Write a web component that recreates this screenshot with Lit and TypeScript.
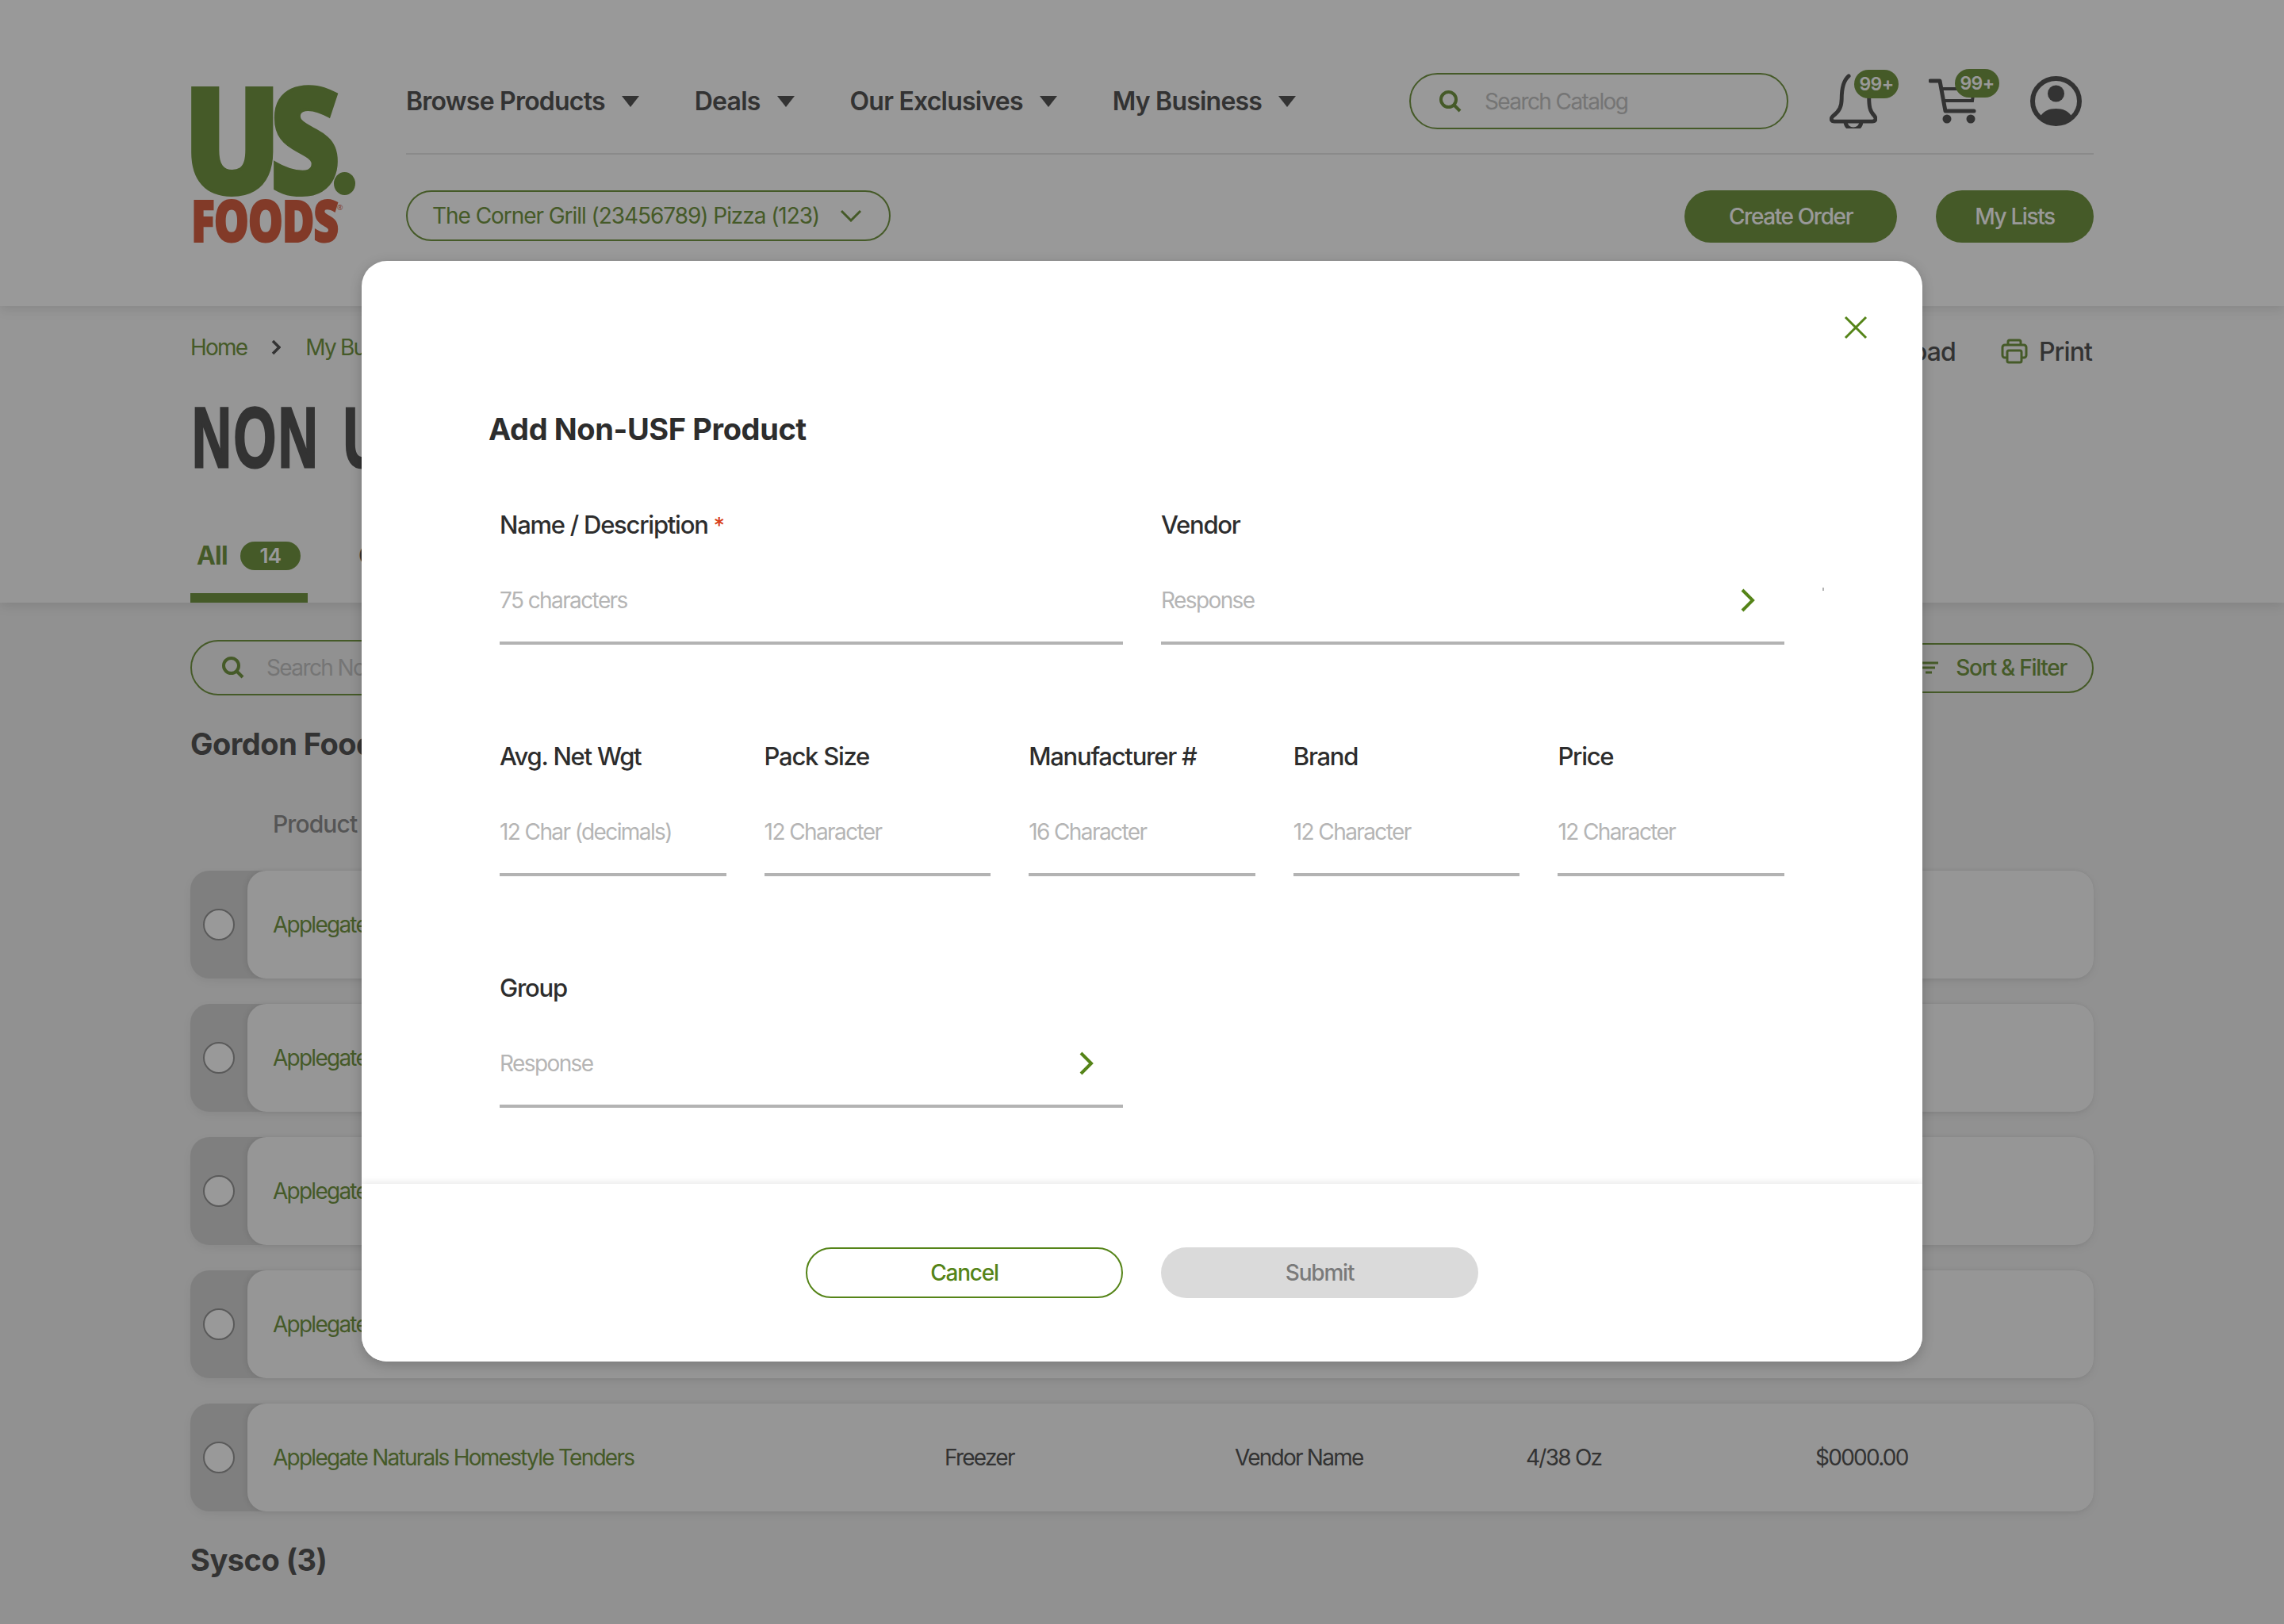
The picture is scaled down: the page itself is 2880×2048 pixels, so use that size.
import { LitElement, html, css, svg } from "lit";
import { customElement } from "lit/decorators.js";

const searchIcon = svg`<circle cx="11.5" cy="11.5" r="9.5" fill="none" stroke="#749643" stroke-width="4"/><path d="M18 18l8 8" stroke="#749643" stroke-width="4" fill="none"/>`;

const rows = [
  "Applegate Naturals Homestyle Tenders",
  "Applegate Naturals Homestyle Tenders",
  "Applegate Naturals Homestyle Tenders",
  "Applegate Naturals Homestyle Tenders",
  "Applegate Naturals Homestyle Tenders",
];

@customElement("app-root")
export class AppRoot extends LitElement {
  static styles = css`
    :host {
      display: block;
      position: relative;
      width: 2880px;
      height: 2048px;
      overflow: hidden;
      font-family: "Inter", "Liberation Sans", sans-serif;
      font-size: 28px;
      letter-spacing: -1.6px;
      color: #555;
      background: #f2f2f2;
    }
    button, input { font: inherit; letter-spacing: inherit; }

    /* header */
    .header {
      position: relative;
      z-index: 2;
      display: flex;
      height: 386px;
      box-sizing: border-box;
      padding: 0 240px;
      background: #fff;
      box-shadow: 0 4px 14px rgba(0, 0, 0, 0.1);
    }
    .logo { width: 272px; flex: none; }
    .logo svg { display: block; margin: 100px 0 0 -12px; }
    .header-main { flex: 1; min-width: 0; }
    .top {
      display: flex;
      align-items: center;
      height: 71px;
      padding: 92px 0 30px;
      border-bottom: 2px solid #e6e6e6;
    }
    .nav { display: flex; gap: 70px; }
    .nav-item {
      display: flex;
      align-items: center;
      gap: 21px;
      font-size: 32px;
      font-weight: 600;
      letter-spacing: -0.78px;
    }
    .caret {
      width: 0;
      height: 0;
      border-left: 11px solid transparent;
      border-right: 11px solid transparent;
      border-top: 14px solid #555;
    }
    .search {
      display: flex;
      align-items: center;
      box-sizing: border-box;
      border: 2px solid #749643;
      border-radius: 36px;
      color: #c4c4c4;
    }
    .search svg { flex: none; }
    .catalog {
      margin-left: auto;
      width: 478px;
      height: 71px;
      padding-left: 36px;
      gap: 29px;
    }
    .icon-box { position: relative; flex: none; display: block; }
    .icon-box svg { display: block; }
    .bell { margin-left: 52px; width: 60px; height: 69px; }
    .cart { margin-left: 65px; width: 60px; height: 57px; }
    .profile { margin-left: 68px; margin-right: 15px; width: 65px; height: 63px; }
    .badge {
      position: absolute;
      display: flex;
      align-items: center;
      justify-content: center;
      width: 56px;
      height: 36px;
      border-radius: 18px;
      background: #749643;
      color: #fff;
      font-size: 23px;
      font-weight: 600;
      letter-spacing: -0.6px;
    }
    .bell .badge { left: 31px; top: -5px; }
    .cart .badge { left: 33px; top: -12px; }
    .sub {
      display: flex;
      align-items: flex-start;
      margin-top: 45px;
    }
    .store {
      display: flex;
      align-items: center;
      gap: 26px;
      box-sizing: border-box;
      width: 611px;
      height: 64px;
      padding-left: 31px;
      border: 2px solid #749643;
      border-radius: 32px;
      color: #749643;
      font-weight: 400;
      letter-spacing: -1.05px;
    }
    .btn-fill {
      display: flex;
      align-items: center;
      justify-content: center;
      height: 66px;
      border: 0;
      border-radius: 33px;
      background: #749643;
      color: #fff;
      font-weight: 500;
      letter-spacing: -1.4px;
    }
    .create { margin-left: auto; width: 268px; }
    .lists { margin-left: 49px; width: 199px; }

    /* title band */
    .band {
      position: relative;
      z-index: 1;
      height: 374px;
      box-sizing: border-box;
      padding: 0 240px;
      background: #fafafa;
      box-shadow: 0 4px 14px rgba(0, 0, 0, 0.1);
    }
    .crumbs {
      display: flex;
      align-items: center;
      height: 104px;
      color: #749643;
      letter-spacing: -1.8px;
    }
    .crumbs .sep { margin: 0 31px; }
    .crumbs .sep svg { display: block; }
    .actions {
      margin-left: auto;
      display: flex;
      align-items: center;
      gap: 57px;
      padding: 10px 2px 0 0;
      color: #555;
      font-size: 32px;
      font-weight: 500;
      letter-spacing: -0.9px;
    }
    .action { display: flex; align-items: center; gap: 14px; }
    .action svg { display: block; }
    .title {
      margin: 3px 0 0 2px;
      height: 118px;
      font-family: "Liberation Sans", sans-serif;
      font-size: 108px;
      line-height: 118px;
      font-weight: 700;
      letter-spacing: 4px;
      word-spacing: 12px;
      white-space: nowrap;
      transform: scaleX(0.64);
      transform-origin: left;
      -webkit-text-stroke: 3px #555;
    }
    .tabs { display: flex; gap: 64px; margin-top: 72px; height: 77px; }
    .tab {
      display: flex;
      align-items: flex-start;
      gap: 16px;
      box-sizing: border-box;
      width: 148px;
      height: 77px;
      padding-left: 8px;
      border-bottom: 12px solid #749643;
      color: #749643;
      font-size: 32px;
      font-weight: 700;
      line-height: 36px;
      letter-spacing: -0.8px;
    }
    .tab-count {
      display: flex;
      align-items: center;
      justify-content: center;
      width: 76px;
      height: 36px;
      border-radius: 18px;
      background: #749643;
      color: #fff;
      font-size: 26px;
      font-weight: 600;
    }
    .tab-plain { color: #555; font-size: 32px; font-weight: 600; line-height: 36px; }

    /* list */
    .main { padding: 47px 240px 0; }
    .tools { display: flex; align-items: center; justify-content: space-between; }
    .notes {
      width: 700px;
      height: 70px;
      padding-left: 38px;
      gap: 28px;
    }
    .sort {
      display: flex;
      align-items: center;
      gap: 22px;
      box-sizing: border-box;
      height: 63px;
      padding: 0 32px;
      border: 2px solid #749643;
      border-radius: 32px;
      color: #749643;
      font-weight: 500;
      letter-spacing: -1.3px;
    }
    .sort svg { display: block; }
    .vendor {
      margin: 0;
      height: 48px;
      font-size: 38px;
      font-weight: 700;
      line-height: 48px;
      letter-spacing: -0.5px;
    }
    .gordon { margin-top: 37px; }
    .sysco { margin-top: 37px; }
    .cols {
      display: grid;
      grid-template-columns: 847px 366px 367px 365px 1fr;
      align-items: center;
    }
    .list-head {
      margin-top: 59px;
      height: 36px;
      padding-left: 104px;
      color: #8e8e8e;
      font-size: 30px;
      font-weight: 500;
      letter-spacing: -0.9px;
    }
    .rows { display: flex; flex-direction: column; gap: 32px; margin-top: 41px; }
    .row {
      display: flex;
      height: 136px;
      border-radius: 24px;
      background: #d4d4d4;
      box-shadow: 0 4px 12px rgba(0, 0, 0, 0.06);
    }
    .tick { display: flex; align-items: center; justify-content: center; width: 72px; flex: none; }
    .radio {
      box-sizing: border-box;
      width: 40px;
      height: 40px;
      border: 2px solid #969696;
      border-radius: 50%;
      background: #fff;
    }
    .card {
      flex: 1;
      padding-left: 32px;
      border-radius: 24px;
      background: #fafafa;
      box-shadow: -2px 0 6px rgba(0, 0, 0, 0.08);
      letter-spacing: -1.75px;
    }
    .card-name { color: #749643; }

    /* modal */
    .overlay {
      position: absolute;
      inset: 0;
      z-index: 5;
      display: flex;
      align-items: center;
      justify-content: center;
      background: rgba(0, 0, 0, 0.4);
    }
    .modal {
      position: relative;
      display: flex;
      flex-direction: column;
      width: 1968px;
      height: 1388px;
      margin-bottom: 2px;
      border-radius: 32px;
      background: #fff;
      color: #2d2d2d;
      box-shadow: 0 4px 16px rgba(0, 0, 0, 0.2);
      overflow: hidden;
    }
    .close { position: absolute; top: 69px; right: 69px; display: block; }
    .speck { position: absolute; left: 1842px; top: 412px; width: 2px; height: 4px; background: #b3b3b3; }
    .modal-body { flex: 1; padding: 188px 174px 0; }
    .modal-title {
      margin: 0 0 77px -14px;
      font-size: 38px;
      font-weight: 650;
      line-height: 48px;
      letter-spacing: -0.4px;
    }
    .form { display: flex; flex-direction: column; gap: 121px; }
    .form-row { display: grid; gap: 48px; }
    .two { grid-template-columns: repeat(2, minmax(0, 1fr)); }
    .five { grid-template-columns: repeat(5, minmax(0, 1fr)); }
    .field label {
      display: block;
      height: 40px;
      font-size: 31px;
      font-weight: 500;
      line-height: 40px;
      letter-spacing: -1.25px;
    }
    .req { color: #d8401a; font-size: 28px; }
    .control {
      display: flex;
      align-items: center;
      box-sizing: border-box;
      height: 131px;
      padding-top: 23px;
      padding-right: 36px;
      border-bottom: 4px solid #b3b3b3;
    }
    .control input {
      flex: 1;
      min-width: 0;
      padding: 0;
      border: 0;
      outline: 0;
      background: none;
      color: #2d2d2d;
    }
    .control input::placeholder { color: #b5b5b5; opacity: 1; }
    .control svg { flex: none; display: block; }
    .modal-foot {
      position: relative;
      display: flex;
      justify-content: center;
      gap: 48px;
      height: 224px;
      box-sizing: border-box;
      padding-top: 80px;
      background: #fff;
      box-shadow: 0 -3px 8px rgba(0, 0, 0, 0.08);
    }
    .pill {
      width: 400px;
      height: 64px;
      border-radius: 32px;
      font-weight: 500;
      letter-spacing: -1.2px;
    }
    .cancel { border: 2px solid #558418; background: #fff; color: #558418; }
    .submit { border: 0; background: #dadada; color: #7a7a7a; }
  `;

  renderField(label: string, placeholder: string, opts: { required?: boolean; chevron?: boolean } = {}) {
    return html`
      <div class="field">
        <label>${label}${opts.required ? html` <span class="req">*</span>` : ""}</label>
        <div class="control">
          <input placeholder=${placeholder} />
          ${opts.chevron
            ? html`<svg width="20" height="30" viewBox="0 0 20 30"><path d="M3 2l13 13L3 28" fill="none" stroke="#558418" stroke-width="4"/></svg>`
            : ""}
        </div>
      </div>
    `;
  }

  render() {
    return html`
      <header class="header">
        <div class="logo">
          <svg width="232" height="216" viewBox="-12 0 232 216">
            <text x="-9" y="144" font-family="Open Sans" font-size="186" font-weight="800" fill="#749643" stroke="#749643" stroke-width="4" textLength="122" lengthAdjust="spacingAndGlyphs">U</text>
            <text x="100" y="144" font-family="Open Sans" font-size="186" font-weight="800" fill="#749643" stroke="#749643" stroke-width="4" textLength="88" lengthAdjust="spacingAndGlyphs">S</text>
            <ellipse cx="194.500" cy="131.500" rx="13.500" ry="14.500" fill="#749643"/>
            <text x="1" y="205" font-family="Open Sans" font-size="72" font-weight="800" fill="#d96143" stroke="#d96143" stroke-width="2" textLength="185" lengthAdjust="spacingAndGlyphs">FOODS</text>
            <text x="185" y="165" font-family="Open Sans" font-size="9" fill="#d96143">®</text>
          </svg>
        </div>
        <div class="header-main">
          <div class="top">
            <nav class="nav">
              ${["Browse Products", "Deals", "Our Exclusives", "My Business"].map(
                (n) => html`<div class="nav-item">${n}<span class="caret"></span></div>`
              )}
            </nav>
            <div class="search catalog">
              <svg width="28" height="28" viewBox="0 0 28 28">${searchIcon}</svg>
              <span>Search Catalog</span>
            </div>
            <div class="icon-box bell">
              <svg width="60" height="69" viewBox="0 0 60 70">
                <path d="M24 3C17 9 15 20 15 32C15 42 12 48 4 54C0 58 2 61 6 61H54C58 61 60 58 57 54C51 48 50 42 50 30" fill="none" stroke="#555" stroke-width="5" stroke-linecap="round"/>
                <path d="M20 62A10 9 0 0 0 40 62" fill="none" stroke="#555" stroke-width="5"/>
              </svg>
              <span class="badge">99+</span>
            </div>
            <div class="icon-box cart">
              <svg width="60" height="57" viewBox="0 0 60 57">
                <path d="M2 3H14L21 41H57" fill="none" stroke="#555" stroke-width="5" stroke-linecap="round" stroke-linejoin="round"/>
                <path d="M16 13H57L55 28H19" fill="none" stroke="#555" stroke-width="4"/>
                <circle cx="23" cy="51" r="5.500" fill="#555"/>
                <circle cx="53" cy="51" r="5.500" fill="#555"/>
              </svg>
              <span class="badge">99+</span>
            </div>
            <div class="icon-box profile">
              <svg width="65" height="63" viewBox="0 0 65 63">
                <ellipse cx="32.500" cy="31.500" rx="29.500" ry="28.500" fill="none" stroke="#555" stroke-width="6"/>
                <circle cx="32.500" cy="22" r="10.500" fill="#555"/>
                <path d="M12 52C16 44 24 41 32.500 41C41 41 49 44 53 52C47 59 40 62 32.500 62C25 62 18 59 12 52Z" fill="#555"/>
              </svg>
            </div>
          </div>
          <div class="sub">
            <div class="store">
              <span>The Corner Grill (23456789) Pizza (123)</span>
              <svg width="28" height="16" viewBox="0 0 28 16"><path d="M2 2l12 12L26 2" fill="none" stroke="#749643" stroke-width="3"/></svg>
            </div>
            <button class="btn-fill create">Create Order</button>
            <button class="btn-fill lists">My Lists</button>
          </div>
        </div>
      </header>

      <section class="band">
        <div class="crumbs">
          <span>Home</span>
          <span class="sep"><svg width="12" height="20" viewBox="0 0 12 20"><path d="M2 2l8 8-8 8" fill="none" stroke="#555" stroke-width="3.500"/></svg></span>
          <span>My Business</span>
          <div class="actions">
            <div class="action">
              <svg width="30" height="32" viewBox="0 0 30 32"><path d="M15 2v18M7 13l8 8 8-8M3 29h24" fill="none" stroke="#749643" stroke-width="3"/></svg>
              <span>Download</span>
            </div>
            <div class="action">
              <svg width="34" height="32" viewBox="0 0 34 32">
                <path d="M9 8V4a2 2 0 0 1 2-2h12a2 2 0 0 1 2 2v4" fill="none" stroke="#749643" stroke-width="3"/>
                <path d="M8 24H5a3 3 0 0 1-3-3V11a3 3 0 0 1 3-3h24a3 3 0 0 1 3 3v10a3 3 0 0 1-3 3h-3" fill="none" stroke="#749643" stroke-width="3"/>
                <rect x="8" y="15" width="18" height="15" rx="2" fill="none" stroke="#749643" stroke-width="3"/>
              </svg>
              <span>Print</span>
            </div>
          </div>
        </div>
        <h1 class="title">NON USF PRODUCTS</h1>
        <div class="tabs">
          <div class="tab"><span>All</span><span class="tab-count">14</span></div>
          <div class="tab-plain">Groups</div>
        </div>
      </section>

      <section class="main">
        <div class="tools">
          <div class="search notes">
            <svg width="28" height="28" viewBox="0 0 28 28">${searchIcon}</svg>
            <span>Search Non-USF Products</span>
          </div>
          <div class="sort">
            <svg width="24" height="16" viewBox="0 0 24 16"><path d="M0 2h24M4 8h16M8 14h8" stroke="#749643" stroke-width="3" fill="none"/></svg>
            <span>Sort &amp; Filter</span>
          </div>
        </div>
        <h2 class="vendor gordon">Gordon Food Service (11)</h2>
        <div class="cols list-head">
          <span>Product</span><span>Storage</span><span>Vendor</span><span>Pack Size</span><span>Price</span>
        </div>
        <div class="rows">
          ${rows.map(
            (name) => html`
              <div class="row">
                <div class="tick"><span class="radio"></span></div>
                <div class="card cols">
                  <span class="card-name">${name}</span>
                  <span>Freezer</span>
                  <span>Vendor Name</span>
                  <span>4/38 Oz</span>
                  <span>$0000.00</span>
                </div>
              </div>
            `
          )}
        </div>
        <h2 class="vendor sysco">Sysco (3)</h2>
      </section>

      <div class="overlay">
        <div class="modal">
          <svg class="close" width="30" height="30" viewBox="0 0 30 30"><path d="M2 2l26 26M28 2L2 28" fill="none" stroke="#558418" stroke-width="3"/></svg>
          <span class="speck"></span>
          <div class="modal-body">
            <h2 class="modal-title">Add Non-USF Product</h2>
            <div class="form">
              <div class="form-row two">
                ${this.renderField("Name / Description", "75 characters", { required: true })}
                ${this.renderField("Vendor", "Response", { chevron: true })}
              </div>
              <div class="form-row five">
                ${this.renderField("Avg. Net Wgt", "12 Char (decimals)")}
                ${this.renderField("Pack Size", "12 Character")}
                ${this.renderField("Manufacturer #", "16 Character")}
                ${this.renderField("Brand", "12 Character")}
                ${this.renderField("Price", "12 Character")}
              </div>
              <div class="form-row two">
                ${this.renderField("Group", "Response", { chevron: true })}
              </div>
            </div>
          </div>
          <div class="modal-foot">
            <button class="pill cancel">Cancel</button>
            <button class="pill submit">Submit</button>
          </div>
        </div>
      </div>
    `;
  }
}
